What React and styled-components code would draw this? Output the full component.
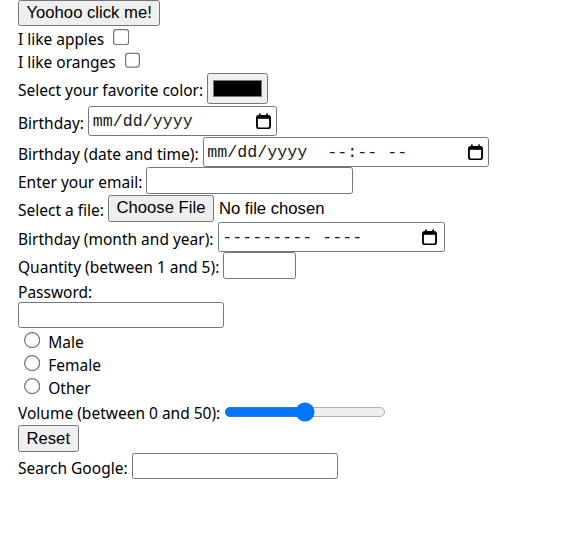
import React from 'react';
import styled, { createGlobalStyle } from 'styled-components';

const GlobalStyle = createGlobalStyle`
  body {
    margin: 0;
    background: #fff;
    font-family: 'Noto Sans', 'Open Sans', sans-serif;
  }
`;

// the whole form is shown at 125%, like the browser zoom in the reference
const Form = styled.form`
  zoom: 1.25;
  padding-left: 14.4px;
  color: #000;
  font-size: 12.4px;
`;

const Row = styled.div`
  display: flex;
  align-items: center;
  gap: ${(p) => p.$gap ?? 3.2}px;
  height: ${(p) => p.$h}px;
  white-space: nowrap;
`;

const Label = styled.label`
  font-family: 'Noto Sans', 'Open Sans', sans-serif;
  line-height: 1;
  margin-top: 3.6px;
`;

const Button = styled.button`
  font-family: 'Liberation Sans', Arial, sans-serif;
  font-size: 13.333px;
  height: 21px;
  padding: 1px 6px;
  border: 1px solid #767676;
  border-radius: 2px;
  background: #efefef;
  color: #000;
`;

const Field = styled.input`
  box-sizing: border-box;
  font-family: 'Liberation Sans', Arial, sans-serif;
  font-size: 13.333px;
  width: ${(p) => p.$w || 165}px;
  height: 21px;
  margin: 0;
  padding: 1px 2px;
  border: 1px solid #767676;
  border-radius: 2px;
  background: #fff;
`;

const DateBox = styled.div`
  box-sizing: border-box;
  display: flex;
  align-items: center;
  justify-content: space-between;
  width: ${(p) => p.$w}px;
  height: 24px;
  padding: 0 ${(p) => p.$pr ?? 4}px 0 3px;
  border: 1px solid #767676;
  border-radius: 2px;
  background: #fff;
  font-family: 'Liberation Mono', 'Courier New', monospace;
  font-size: 13.333px;
  color: #1a1a1a;
  white-space: pre;
  cursor: text;
`;

const CalendarIcon = () => (
  <svg width="12" height="13" viewBox="0 0 12 13" aria-hidden="true">
    <rect x="0.75" y="2.25" width="10.5" height="10" rx="1.6" fill="none" stroke="#000" strokeWidth="1.5" />
    <rect x="0.75" y="2.25" width="10.5" height="2.4" fill="#000" />
    <rect x="2.4" y="0.4" width="1.4" height="2.6" fill="#000" />
    <rect x="8.2" y="0.4" width="1.4" height="2.6" fill="#000" />
  </svg>
);

const ColorField = styled.input`
  box-sizing: border-box;
  width: 49px;
  height: 25px;
  margin: 0;
  padding: 1px 2px;
  border: 1px solid #767676;
  border-radius: 2px;
  background: #efefef;
`;

const FileField = styled.input`
  font-family: 'Liberation Sans', Arial, sans-serif;
  font-size: 13.333px;
  margin: 0;
  &::file-selector-button {
    font-family: 'Liberation Sans', Arial, sans-serif;
    font-size: 13.333px;
    height: 21.6px;
    padding: 1px 6px;
    margin-right: 4px;
    border: 1px solid #767676;
    border-radius: 2px;
    background: #efefef;
  }
`;

const Check = styled.input`
  margin: 0 3px 0 4px;
`;

const Radio = styled.input`
  margin: 0 3px 0 5px;
`;

const Range = styled.input`
  width: 129px;
  margin: 2px;
  accent-color: #0075ff;
`;

export default function App() {
  return (
    <>
      <GlobalStyle />
      <Form onSubmit={(e) => e.preventDefault()}>
        <Row $h={20.8}>
          <Button type="button">Yoohoo click me!</Button>
        </Row>
        <Row $h={18.4}>
          <Label htmlFor="apples">I like apples</Label>
          <Check type="checkbox" id="apples" />
        </Row>
        <Row $h={18.4}>
          <Label htmlFor="oranges">I like oranges</Label>
          <Check type="checkbox" id="oranges" />
        </Row>
        <Row $h={26.4}>
          <Label htmlFor="color">Select your favorite color:</Label>
          <ColorField type="color" id="color" defaultValue="#000000" />
        </Row>
        <Row $h={25.6}>
          <Label htmlFor="birthday">Birthday:</Label>
          <DateBox id="birthday" $w={151}>
            <span>mm/dd/yyyy</span>
            <CalendarIcon />
          </DateBox>
        </Row>
        <Row $h={24}>
          <Label htmlFor="birthdaytime">Birthday (date and time):</Label>
          <DateBox id="birthdaytime" $w={229}>
            <span>mm/dd/yyyy  --:-- --</span>
            <CalendarIcon />
          </DateBox>
        </Row>
        <Row $h={21.6}>
          <Label htmlFor="email">Enter your email:</Label>
          <Field type="email" id="email" />
        </Row>
        <Row $h={22.4}>
          <Label htmlFor="file">Select a file:</Label>
          <FileField type="file" id="file" />
        </Row>
        <Row $h={24}>
          <Label htmlFor="bdaymonth">Birthday (month and year):</Label>
          <DateBox id="bdaymonth" $w={182} $pr={6}>
            <span>--------- ----</span>
            <CalendarIcon />
          </DateBox>
        </Row>
        <Row $h={21.6}>
          <Label htmlFor="quantity">Quantity (between 1 and 5):</Label>
          <Field type="number" id="quantity" min="1" max="5" $w={58} />
        </Row>
        <Row $h={17.6}>
          <Label htmlFor="pwd">Password:</Label>
        </Row>
        <Row $h={22.4}>
          <Field type="password" id="pwd" />
        </Row>
        <Row $h={18.4}>
          <Radio type="radio" id="male" name="gender" />
          <Label htmlFor="male">Male</Label>
        </Row>
        <Row $h={18.4}>
          <Radio type="radio" id="female" name="gender" />
          <Label htmlFor="female">Female</Label>
        </Row>
        <Row $h={18.4}>
          <Radio type="radio" id="other" name="gender" />
          <Label htmlFor="other">Other</Label>
        </Row>
        <Row $h={21.6} $gap={1.2}>
          <Label htmlFor="vol">Volume (between 0 and 50):</Label>
          <Range type="range" id="vol" min="0" max="50" defaultValue="25" />
        </Row>
        <Row $h={21.6}>
          <Button type="reset">Reset</Button>
        </Row>
        <Row $h={22.4}>
          <Label htmlFor="gsearch">Search Google:</Label>
          <Field type="search" id="gsearch" />
        </Row>
      </Form>
    </>
  );
}
